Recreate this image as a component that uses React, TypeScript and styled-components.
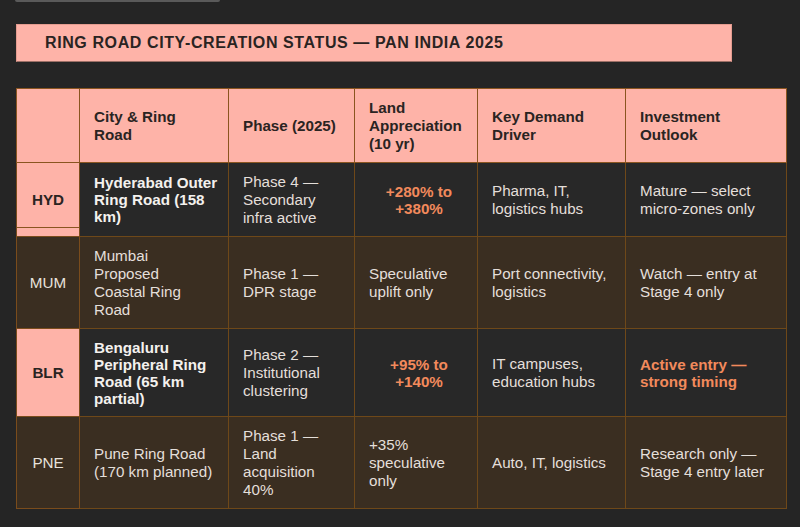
import styled, { createGlobalStyle } from "styled-components";

const GlobalStyle = createGlobalStyle`
  html, body {
    margin: 0;
    padding: 0;
    background: #252525;
  }
  body {
    font-family: "Liberation Sans", Arial, sans-serif;
  }
`;

const Page = styled.div`
  width: 800px;
  height: 527px;
  box-sizing: border-box;
  padding: 0 14px 0 16px;
  background: #252525;
  overflow: hidden;
`;

const ScrollHint = styled.div`
  width: 205px;
  height: 2px;
  margin-left: -1px;
  border-radius: 0 0 2px 2px;
  background: #5a5a5a;
`;

const TitleBar = styled.div`
  width: 716px;
  height: 38px;
  box-sizing: border-box;
  margin-top: 22px;
  padding-left: 28px;
  display: flex;
  align-items: center;
  background: #feb3a8;
  border: 1px solid #e49c90;
  border-bottom-color: #9c6f66;
  color: #2a2422;
  font-size: 16px;
  font-weight: 700;
  letter-spacing: 0.6px;
`;

const Table = styled.table`
  margin-top: 26px;
  width: 770px;
  table-layout: fixed;
  border-collapse: collapse;
  font-size: 15.2px;
`;

const HeadCell = styled.th`
  background: #feb3a8;
  color: #2a2422;
  border: 1px solid #8a5520;
  padding: 9.5px 14px;
  text-align: left;
  vertical-align: middle;
  font-weight: 700;
  line-height: 18px;
`;

const Row = styled.tr<{ $tone: "dark" | "brown" }>`
  background: ${(p) => (p.$tone === "dark" ? "#282828" : "#3a2e21")};
`;

const CodeCell = styled.td<{ $hot?: boolean; $split?: boolean }>`
  border: 1px solid #7a4c1c;
  text-align: center;
  vertical-align: middle;
  line-height: 18px;
  padding: 9.5px 4px;
  background: ${(p) => (p.$hot ? "#feb3a8" : "transparent")};
  color: ${(p) => (p.$hot ? "#2a2422" : "#e8e2dc")};
  font-weight: ${(p) => (p.$hot ? 700 : 400)};
  box-shadow: ${(p) => (p.$split ? "inset 0 -8px 0 0 #feb3a8, inset 0 -9px 0 0 #8a5520" : "none")};
`;

const Cell = styled.td<{ $strong?: boolean; $accent?: boolean; $center?: boolean }>`
  border: 1px solid #6e4819;
  padding: ${(p) => (p.$strong || p.$accent ? "9.5px 8px 9.5px 14px" : "9.5px 14px")};
  vertical-align: middle;
  text-align: ${(p) => (p.$center ? "center" : "left")};
  line-height: ${(p) => (p.$strong || p.$accent ? "17px" : "18px")};
  font-weight: ${(p) => (p.$strong || p.$accent ? 700 : 400)};
  color: ${(p) => (p.$accent ? "#f28a5c" : p.$strong ? "#f4f1ee" : "#e4dfda")};
`;

type RowData = {
  code: string;
  hot: boolean;
  tone: "dark" | "brown";
  city: string;
  phase: string;
  appreciation: string;
  driver: string;
  outlook: string;
  outlookAccent?: boolean;
};

const rows: RowData[] = [
  {
    code: "HYD",
    hot: true,
    tone: "dark",
    city: "Hyderabad Outer Ring Road (158 km)",
    phase: "Phase 4 — Secondary infra active",
    appreciation: "+280% to +380%",
    driver: "Pharma, IT, logistics hubs",
    outlook: "Mature — select micro-zones only",
  },
  {
    code: "MUM",
    hot: false,
    tone: "brown",
    city: "Mumbai Proposed Coastal Ring Road",
    phase: "Phase 1 — DPR stage",
    appreciation: "Speculative uplift only",
    driver: "Port connectivity, logistics",
    outlook: "Watch — entry at Stage 4 only",
  },
  {
    code: "BLR",
    hot: true,
    tone: "dark",
    city: "Bengaluru Peripheral Ring Road (65 km partial)",
    phase: "Phase 2 — Institutional clustering",
    appreciation: "+95% to +140%",
    driver: "IT campuses, education hubs",
    outlook: "Active entry — strong timing",
    outlookAccent: true,
  },
  {
    code: "PNE",
    hot: false,
    tone: "brown",
    city: "Pune Ring Road (170 km planned)",
    phase: "Phase 1 — Land acquisition 40%",
    appreciation: "+35% speculative only",
    driver: "Auto, IT, logistics",
    outlook: "Research only — Stage 4 entry later",
  },
];

const widths = [63, 149, 126, 123, 148, 161];

function App() {
  return (
    <Page>
      <GlobalStyle />
      <ScrollHint />
      <TitleBar>RING ROAD CITY-CREATION STATUS — PAN INDIA 2025</TitleBar>
      <Table>
        <colgroup>
          {widths.map((w, i) => (
            <col key={i} style={{ width: w }} />
          ))}
        </colgroup>
        <thead>
          <tr>
            <HeadCell />
            <HeadCell>City &amp; Ring Road</HeadCell>
            <HeadCell>Phase (2025)</HeadCell>
            <HeadCell>Land Appreciation (10 yr)</HeadCell>
            <HeadCell>Key Demand Driver</HeadCell>
            <HeadCell>Investment Outlook</HeadCell>
          </tr>
        </thead>
        <tbody>
          {rows.map((r) => (
            <Row key={r.code} $tone={r.tone}>
              <CodeCell $hot={r.hot} $split={r.code === "HYD"}>
                {r.code}
              </CodeCell>
              <Cell $strong={r.hot}>{r.city}</Cell>
              <Cell>{r.phase}</Cell>
              <Cell $accent={r.hot} $center={r.hot}>
                {r.appreciation}
              </Cell>
              <Cell>{r.driver}</Cell>
              <Cell $accent={r.outlookAccent}>{r.outlook}</Cell>
            </Row>
          ))}
        </tbody>
      </Table>
    </Page>
  );
}

export default App;
